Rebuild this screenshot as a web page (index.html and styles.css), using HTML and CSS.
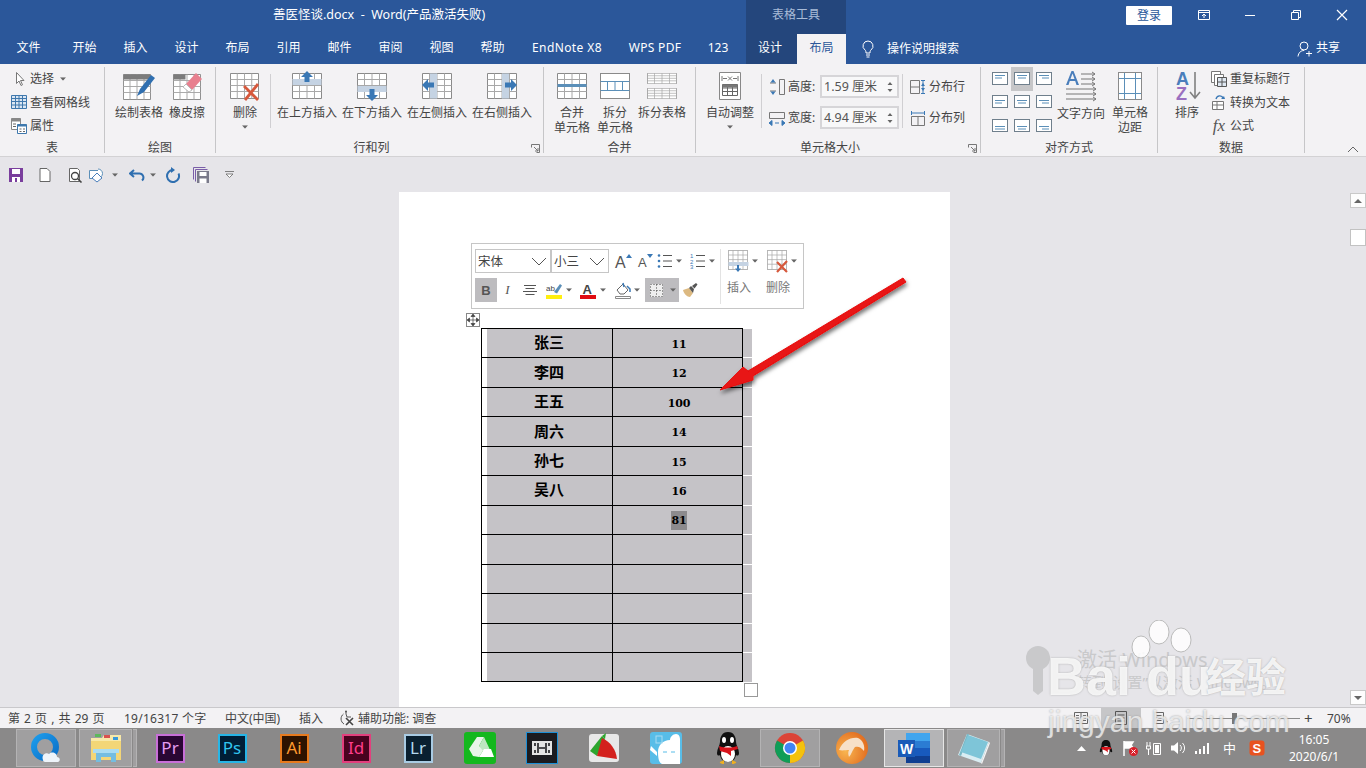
FILE: index.html
```html
<!DOCTYPE html>
<html lang="zh-CN">
<head>
<meta charset="utf-8">
<title>善医怪谈.docx - Word</title>
<link rel="stylesheet" href="styles.css">
</head>
<body>
<svg class="defs" width="0" height="0">
  <symbol id="grid" viewBox="0 0 30 26" preserveAspectRatio="none"><path d="M.5.5h29v25H.5z" fill="#fff" stroke="#8a8a8a"/><path d="M.5 6.500h29M.5 12.500h29M.5 18.500h29M7.500.5v25M15 .5v25M22.500.5v25" fill="none" stroke="#a8a8a8"/></symbol>
  <symbol id="al" viewBox="0 0 16 14"><rect x=".5" y=".5" width="15" height="12" fill="#fff" stroke="#6f7f8c"/></symbol>
  <symbol id="caret" viewBox="0 0 7 4"><path d="M0 0h7L3.500 4z" fill="#666"/></symbol>
</svg>

<header class="title-bar">
  <div class="doc-title">善医怪谈.docx&nbsp; -&nbsp; Word(产品激活失败)</div>
  <div class="context-title">表格工具</div>
  <button class="login">登录</button>
  <div class="win-btn"><svg class="i16" viewBox="0 0 16 16"><path d="M2.500 3.500h11v9h-11zM2.500 5.500h11M8 11V7M6 9l2-2 2 2" fill="none" stroke="#fff"/></svg></div>
  <div class="win-btn"><svg class="i16" viewBox="0 0 16 16"><path d="M3 8.500h10" stroke="#fff"/></svg></div>
  <div class="win-btn"><svg class="i16" viewBox="0 0 16 16"><path d="M3.500 5.500h7v7h-7zM5.500 5V3.500h7v7H11" fill="none" stroke="#fff"/></svg></div>
  <div class="win-btn"><svg class="i16" viewBox="0 0 16 16"><path d="M3 3l10 10M13 3L3 13" stroke="#fff" stroke-width="1.200"/></svg></div>
</header>

<nav class="tabs">
  <div class="tab t-file">文件</div>
  <div class="tab">开始</div><div class="tab">插入</div><div class="tab">设计</div><div class="tab">布局</div>
  <div class="tab">引用</div><div class="tab">邮件</div><div class="tab">审阅</div><div class="tab">视图</div><div class="tab">帮助</div>
  <div class="tab t-en">EndNote X8</div><div class="tab t-wps">WPS PDF</div><div class="tab t-123">123</div>
  <div class="tab t-ctx">设计</div><div class="tab t-active">布局</div>
  <svg class="bulb" viewBox="0 0 14 18"><path d="M7 1a5 5 0 0 0-3 9c.8.7 1 1.500 1 3h4c0-1.500.2-2.300 1-3a5 5 0 0 0-3-9zM5 15h4M5.500 17h3" fill="none" stroke="#fff"/></svg>
  <div class="tell">操作说明搜索</div>
  <svg class="person" viewBox="0 0 16 16"><circle cx="7" cy="5" r="4" fill="none" stroke="#fff"/><path d="M1 15.500c.5-4 3-6 6-6M12 10v5.500M9 12.500h6" fill="none" stroke="#fff"/></svg>
  <div class="share">共享</div>
</nav>

<section class="ribbon">
  <div class="group g1">
    <div class="g-body small-col">
      <div class="s-row"><svg class="i16" viewBox="0 0 16 16"><path d="M5.500 1.500v11l2.500-2.500 2 4.500 1.500-.7-2-4.300h3.500z" fill="#fff" stroke="#777"/></svg><span>选择</span><svg class="caret" viewBox="0 0 7 4"><use href="#caret"/></svg></div>
      <div class="s-row"><svg class="i16" viewBox="0 0 16 14"><path d="M.5.500h15v13H.5z" fill="#dbe7f3" stroke="#3f78ad"/><path d="M.5 3.500h15M.5 6.500h15M.5 10h15M4.500.5v13M8 .5v13M11.500.5v13" stroke="#3f78ad" fill="none"/></svg><span>查看网格线</span></div>
      <div class="s-row"><svg class="i16" viewBox="0 0 16 16"><path d="M.5.500h9v11h-9z" fill="#fff" stroke="#888"/><path d="M.5.500h9v3h-9z" fill="#888"/><path d="M6.500 6.500h9v9h-9z" fill="#fff" stroke="#3f78ad"/><path d="M6.500 6.500h9v2h-9z" fill="#3f78ad"/><path d="M8.500 11h2M12 11h2M8.500 13.500h2M12 13.500h2M2 6h3M2 8.500h3" stroke="#666"/></svg><span>属性</span></div>
    </div>
    <div class="g-label">表</div>
  </div>

  <div class="group g2">
    <div class="g-body">
      <div class="big"><svg class="i-wide" viewBox="0 0 32 30"><use href="#grid" x="0" y="3" width="28" height="26"/><rect x=".5" y="3.500" width="27" height="5" fill="#7b7b7b"/><path d="M14 25l3-7L28 4l4 3-11 14z" fill="#2f6fb0"/></svg><span>绘制表格</span></div>
      <div class="big b-eraser"><svg class="i30" viewBox="0 0 30 30"><use href="#grid" x="1" y="3" width="28" height="26"/><rect x="1.500" y="3.500" width="12" height="5" fill="#7b7b7b"/><path d="M14 13L24 2l6 6-10 11z" fill="#e8808f"/><path d="M14 13l6 6-3 2-6-5z" fill="#fff" stroke="#bbb"/></svg><span>橡皮擦</span></div>
    </div>
    <div class="g-label">绘图</div>
  </div>

  <div class="group g3">
    <div class="g-body">
      <div class="big b-del"><svg class="i30" viewBox="0 0 30 30"><use href="#grid" x="0" y="2" width="29" height="26"/><path d="M14 15l14 14M28 13L15 29" stroke="#d6583c" stroke-width="2.800"/></svg><span>删除</span><svg class="caret-b" viewBox="0 0 7 4"><use href="#caret"/></svg></div>
      <div class="v-sep s1"></div>
      <div class="big b-ins"><svg class="i30" viewBox="0 0 30 30"><use href="#grid" x="0" y="2" width="30" height="26"/><rect x=".5" y="8" width="29" height="6" fill="#c5d3e3"/><path d="M15 0l6 6h-3.500v5h-5V6H9z" fill="#3a78b5"/></svg><span>在上方插入</span></div>
      <div class="big b-ins"><svg class="i30" viewBox="0 0 30 30"><use href="#grid" x="0" y="2" width="30" height="26"/><rect x=".5" y="15" width="29" height="6" fill="#c5d3e3"/><path d="M15 30l-6-6h3.500v-6h5v6H21z" fill="#3a78b5"/></svg><span>在下方插入</span></div>
      <div class="big b-ins"><svg class="i30" viewBox="0 0 30 30"><use href="#grid" x="0" y="2" width="30" height="26"/><rect x="8" y="2.500" width="7" height="25" fill="#c5d3e3"/><path d="M0 14l6-6v3.500h6v5H6V20z" fill="#3a78b5"/></svg><span>在左侧插入</span></div>
      <div class="big b-ins"><svg class="i30" viewBox="0 0 30 30"><use href="#grid" x="0" y="2" width="30" height="26"/><rect x="15" y="2.500" width="7" height="25" fill="#c5d3e3"/><path d="M30 14l-6-6v3.500h-6v5h6V20z" fill="#3a78b5"/></svg><span>在右侧插入</span></div>
    </div>
    <div class="g-label g3-label">行和列</div>
    <svg class="launcher" viewBox="0 0 9 9"><path d="M.5 3.500V.5h8v8h-3M3 3l4 4M7 4v3H4" fill="none" stroke="#777"/></svg>
  </div>

  <div class="group g4">
    <div class="g-body">
      <div class="big"><svg class="i30" viewBox="0 0 30 30"><use href="#grid" x="0" y="2" width="30" height="26"/><path d="M.5 14.500h29M.5 13.500h29M.5 15.500h29" stroke="#5b8fb8"/></svg><span>合并<br>单元格</span></div>
      <div class="big b-split"><svg class="i30" viewBox="0 0 30 30"><rect x=".5" y="2.500" width="29" height="25" fill="#fff" stroke="#8a8a8a"/><path d="M.5 10.500h29M.5 19.500h29" stroke="#5b8fb8"/><path d="M7.500 10.500v9M15 10.500v9M22.500 10.500v9" stroke="#5b8fb8"/></svg><span>拆分<br>单元格</span></div>
      <div class="big b-splitt"><svg class="i30" viewBox="0 0 30 30"><use href="#grid" x="0" y="2" width="30" height="11"/><use href="#grid" x="0" y="17" width="30" height="11"/></svg><span>拆分表格</span></div>
    </div>
    <div class="g-label">合并</div>
  </div>

  <div class="group g5">
    <div class="g-body">
      <div class="big b-auto"><svg class="i30" viewBox="0 0 30 30"><path d="M4.500 1.500h21v27h-21z" fill="#fff" stroke="#888"/><path d="M7 5v5M23 5v5M8 7.500h4M18 7.500h4M13 5.500l4 4M17 5.500l-4 4" stroke="#777" fill="none"/><path d="M7.500 13.500h15v11h-15zM7.500 17h15M7.500 20.500h15M12.500 13.500v11M17.500 13.500v11" stroke="#666" fill="none"/><rect x="7.500" y="13.500" width="15" height="3" fill="#777"/></svg><span>自动调整</span><svg class="caret-b" viewBox="0 0 7 4"><use href="#caret"/></svg></div>
      <div class="v-sep s2"></div>
      <div class="size-col">
        <div class="size-row"><svg class="i16" viewBox="0 0 16 16"><path d="M10.500.5h5v15h-5zM1 4h6M1 12h6" fill="none" stroke="#777"/><path d="M4 0L1.500 3.500h5zM4 16L1.500 12.500h5z" fill="#3a78b5"/></svg><span class="sz-label">高度:</span><div class="sz-input"><span>1.59 厘米</span><svg class="spin" viewBox="0 0 8 16"><path d="M4 3L1.500 6h5zM4 13L1.500 10h5z" fill="#666"/></svg></div></div>
        <div class="size-row"><svg class="i16" viewBox="0 0 16 16"><path d="M.5 2.500h15v6H.5z" fill="none" stroke="#777"/><path d="M0 13l3-2.500v5zM16 13l-3-2.500v5zM6 13h4" fill="#3a78b5" stroke="#3a78b5"/></svg><span class="sz-label">宽度:</span><div class="sz-input"><span>4.94 厘米</span><svg class="spin" viewBox="0 0 8 16"><path d="M4 3L1.500 6h5zM4 13L1.500 10h5z" fill="#666"/></svg></div></div>
      </div>
      <div class="v-sep s3"></div>
      <div class="size-col dist">
        <div class="size-row"><svg class="i16" viewBox="0 0 16 16"><path d="M.5 1.500h9v13h-9zM.5 8h9" fill="none" stroke="#777"/><path d="M13 1v14M11 1.500h4M11 14.500h4" fill="none" stroke="#3a78b5"/><path d="M13 4l-2 3h4zM13 12l-2-3h4z" fill="#3a78b5"/></svg><span>分布行</span></div>
        <div class="size-row"><svg class="i16" viewBox="0 0 16 16"><path d="M1.500 6.500h13v9h-13zM8 6.500v9" fill="none" stroke="#777"/><path d="M1 3h14M1.500 1v4M14.500 1v4" fill="none" stroke="#3a78b5"/></svg><span>分布列</span></div>
      </div>
    </div>
    <div class="g-label g5-label">单元格大小</div>
    <svg class="launcher" viewBox="0 0 9 9"><path d="M.5 3.500V.5h8v8h-3M3 3l4 4M7 4v3H4" fill="none" stroke="#777"/></svg>
  </div>

  <div class="group g6">
    <div class="g-body">
      <div class="align-grid">
        <div class="al"><svg class="i-al" viewBox="0 0 16 14"><use href="#al" width="16" height="14"/><path d="M3 3.500h10M3 6h7" stroke="#5b8fb8"/></svg></div>
        <div class="al al-on"><svg class="i-al" viewBox="0 0 16 14"><use href="#al" width="16" height="14"/><path d="M3 3.500h10M4 6h8" stroke="#5b8fb8"/></svg></div>
        <div class="al"><svg class="i-al" viewBox="0 0 16 14"><use href="#al" width="16" height="14"/><path d="M3 3.500h10M6 6h7" stroke="#5b8fb8"/></svg></div>
        <div class="al"><svg class="i-al" viewBox="0 0 16 14"><use href="#al" width="16" height="14"/><path d="M3 5.500h10M3 8h7" stroke="#5b8fb8"/></svg></div>
        <div class="al"><svg class="i-al" viewBox="0 0 16 14"><use href="#al" width="16" height="14"/><path d="M3 5.500h10M4 8h8" stroke="#5b8fb8"/></svg></div>
        <div class="al"><svg class="i-al" viewBox="0 0 16 14"><use href="#al" width="16" height="14"/><path d="M3 5.500h10M6 8h7" stroke="#5b8fb8"/></svg></div>
        <div class="al"><svg class="i-al" viewBox="0 0 16 14"><use href="#al" width="16" height="14"/><path d="M3 7.500h10M3 10h10" stroke="#5b8fb8"/></svg></div>
        <div class="al"><svg class="i-al" viewBox="0 0 16 14"><use href="#al" width="16" height="14"/><path d="M3 7.500h10M4 10h8" stroke="#5b8fb8"/></svg></div>
        <div class="al"><svg class="i-al" viewBox="0 0 16 14"><use href="#al" width="16" height="14"/><path d="M3 7.500h10M6 10h7" stroke="#5b8fb8"/></svg></div>
      </div>
      <div class="big b-dir"><svg class="i-dir" viewBox="0 0 32 32"><path d="M1 15L6.500 1h2L14 15h-2.500l-1.300-4H4.800l-1.300 4zM5.500 9h4L7.500 3.500z" fill="#4a7ebb"/><path d="M16 4h14M16 9h14M16 14h14M1 19h30M1 24h30M1 29h30M27 2l3 2-3 2M27 7l3 2-3 2M27 12l3 2-3 2M28 17l3 2-3 2M28 22l3 2-3 2M28 27l3 2-3 2" fill="none" stroke="#777"/></svg><span>文字方向</span></div>
      <div class="big b-marg"><svg class="i30" viewBox="0 0 30 30"><rect x="3.500" y="1.500" width="23" height="27" fill="#fff" stroke="#8a8a8a"/><path d="M9.500 2v26M20.500 2v26M4 7.500h22M4 22.500h22" stroke="#5b8fb8" fill="none"/></svg><span>单元格<br>边距</span></div>
    </div>
    <div class="g-label">对齐方式</div>
  </div>

  <div class="group g7">
    <div class="g-body">
      <div class="big b-sort"><svg class="i-sort" viewBox="0 0 28 30"><text x="3" y="14" class="az-a">A</text><text x="3" y="29" class="az-z">Z</text><path d="M22 1v26M17 21l5 6 5-6" fill="none" stroke="#808080" stroke-width="1.600"/></svg><span>排序</span></div>
      <div class="small-col data-col">
        <div class="s-row"><svg class="i16" viewBox="0 0 16 16"><path d="M.5.500h9v11h-9z" fill="#fff" stroke="#777"/><path d="M3.500 3.500h9v11h-9z" fill="#fff" stroke="#777"/><path d="M6.500 6.500h9v9h-9zM6.500 11h9M11 6.500v9" fill="#dfe8f2" stroke="#555"/></svg><span>重复标题行</span></div>
        <div class="s-row"><svg class="i16" viewBox="0 0 16 16"><path d="M1.500 7.500h11v8h-11zM1.500 11h11M6 7.500v8" fill="#fff" stroke="#777"/><path d="M5 5c1-4 6-4 7-1" fill="none" stroke="#3a78b5" stroke-width="1.400"/><path d="M10 5l4 0-1-3z" fill="#3a78b5"/></svg><span>转换为文本</span></div>
        <div class="s-row"><span class="fx">fx</span><span>公式</span></div>
      </div>
    </div>
    <div class="g-label g7-label">数据</div>
  </div>
  <svg class="collapse" viewBox="0 0 12 7"><path d="M1 6l5-5 5 5" fill="none" stroke="#666"/></svg>
</section>

<section class="qat">
  <svg class="q q-save" viewBox="0 0 16 16"><path d="M1 1h14v14H1z" fill="#7a3e9d"/><rect x="4" y="2" width="8" height="5" fill="#fff"/><rect x="4" y="10" width="8" height="5" fill="#fff"/><rect x="7" y="11" width="2" height="4" fill="#7a3e9d"/></svg>
  <svg class="q q-new" viewBox="0 0 16 16"><path d="M3 1.500h7l3 3v10H3z" fill="#fff" stroke="#666"/></svg>
  <svg class="q q-prev" viewBox="0 0 16 16"><path d="M2.500 1.500h8l2 2v11h-10z" fill="#fff" stroke="#666"/><circle cx="8" cy="9" r="3.500" fill="none" stroke="#444" stroke-width="1.300"/><path d="M10.500 11.500l4 4" stroke="#444" stroke-width="1.600"/></svg>
  <svg class="q q-shape" viewBox="0 0 16 16"><path d="M.5 3.500h9v8h-9z" fill="#fff" stroke="#5b8fb8"/><path d="M9 2a4.500 4.500 0 1 1 0 9" fill="#fff" stroke="#5b8fb8"/><path d="M8 6l5 5-5 4-5-4z" fill="#fff" stroke="#4a7ebb"/></svg>
  <svg class="q-caret" viewBox="0 0 7 4"><use href="#caret"/></svg>
  <svg class="q q-undo" viewBox="0 0 16 16"><path d="M5 3L1 6.500 5 10M1.500 6.500H10a4 4 0 0 1 3 7" fill="none" stroke="#2f6fb0" stroke-width="2"/></svg>
  <svg class="q-caret c2" viewBox="0 0 7 4"><use href="#caret"/></svg>
  <svg class="q q-redo" viewBox="0 0 16 16"><path d="M8 3a6 6 0 1 0 5.500 3.500" fill="none" stroke="#2f6fb0" stroke-width="2"/><path d="M6 0v6l4-3z" fill="#2f6fb0"/></svg>
  <svg class="q q-saveall" viewBox="0 0 16 16"><path d="M.5.500h12M.5.500v12M2.500 2.500h12M2.500 2.500v12" fill="none" stroke="#7a5ea8"/><path d="M4 4h12v12H4z" fill="#7a7a8a"/><rect x="6.500" y="5" width="7" height="4" fill="#fff"/><rect x="6.500" y="11.500" width="7" height="4.500" fill="#fff"/></svg>
  <svg class="q-more" viewBox="0 0 9 7"><path d="M0 .5h9M1 3h7L4.500 6.500z" fill="#fff" stroke="#666" stroke-width=".8"/></svg>
</section>

<main class="work">
  <div class="page-wrap">
    <div class="page">
      <div class="doc-table">
        <div class="t-row"><div class="cell c-a">张三</div><div class="cell c-b">11</div><div class="row-end"></div></div>
        <div class="t-row"><div class="cell c-a">李四</div><div class="cell c-b">12</div><div class="row-end"></div></div>
        <div class="t-row"><div class="cell c-a">王五</div><div class="cell c-b">100</div><div class="row-end"></div></div>
        <div class="t-row"><div class="cell c-a">周六</div><div class="cell c-b">14</div><div class="row-end"></div></div>
        <div class="t-row"><div class="cell c-a">孙七</div><div class="cell c-b">15</div><div class="row-end"></div></div>
        <div class="t-row"><div class="cell c-a">吴八</div><div class="cell c-b">16</div><div class="row-end"></div></div>
        <div class="t-row"><div class="cell c-a"></div><div class="cell c-b"><span class="sel">81</span></div><div class="row-end"></div></div>
        <div class="t-row"><div class="cell c-a"></div><div class="cell c-b"></div><div class="row-end"></div></div>
        <div class="t-row"><div class="cell c-a"></div><div class="cell c-b"></div><div class="row-end"></div></div>
        <div class="t-row"><div class="cell c-a"></div><div class="cell c-b"></div><div class="row-end"></div></div>
        <div class="t-row"><div class="cell c-a"></div><div class="cell c-b"></div><div class="row-end"></div></div>
        <div class="t-row t-last"><div class="cell c-a"></div><div class="cell c-b"></div><div class="row-end"></div></div>
        <div class="move-handle"><svg viewBox="0 0 12 12"><path d="M6 0l2 2.500H4zM6 12l2-2.500H4zM0 6l2.500-2v4zM12 6L9.500 4v4zM6 2v8M2 6h8" fill="#444" stroke="#444" stroke-width=".7"/></svg></div>
        <div class="resize-handle"></div>
      </div>

      <div class="mini">
        <div class="mini-left">
          <div class="mini-row">
            <div class="combo c-font"><span>宋体</span><svg class="chev" viewBox="0 0 16 9"><path d="M1 1l7 7 7-7" fill="none" stroke="#555"/></svg></div>
            <div class="combo c-size"><span>小三</span><svg class="chev" viewBox="0 0 16 9"><path d="M1 1l7 7 7-7" fill="none" stroke="#555"/></svg></div>
            <div class="mi m-grow"><span class="big-a">A</span><svg class="tri" viewBox="0 0 6 4"><path d="M3 0l3 4H0z" fill="#3a78b5"/></svg></div>
            <div class="mi m-shrink"><span class="small-a">A</span><svg class="tri" viewBox="0 0 6 4"><path d="M3 4l3-4H0z" fill="#3a78b5"/></svg></div>
            <div class="mi m-list"><svg class="i16" viewBox="0 0 16 16"><circle cx="2" cy="2.500" r="1.300" fill="#3a78b5"/><circle cx="2" cy="8" r="1.300" fill="#3a78b5"/><circle cx="2" cy="13.500" r="1.300" fill="#3a78b5"/><path d="M6 2.500h9M6 8h9M6 13.500h9" stroke="#555"/></svg><svg class="mc" viewBox="0 0 7 4"><use href="#caret"/></svg></div>
            <div class="mi m-list m-list2"><svg class="i16" viewBox="0 0 16 16"><text x="0" y="5" class="numtxt">1</text><text x="0" y="10.500" class="numtxt">2</text><text x="0" y="16" class="numtxt">3</text><path d="M6 2.500h9M6 8h9M6 13.500h9" stroke="#555"/></svg><svg class="mc" viewBox="0 0 7 4"><use href="#caret"/></svg></div>
          </div>
          <div class="mini-row row2">
            <div class="mb m-b">B</div>
            <div class="mb m-i">I</div>
            <div class="mb m-al"><svg class="i16" viewBox="0 0 16 16"><path d="M2 3.500h12M3.500 6.500h9M1 9.500h14M3.500 12.500h9" stroke="#555"/></svg></div>
            <div class="mb m-hl"><svg class="i-hl" viewBox="0 0 16 17"><text x="0" y="9" class="hltxt">ab</text><path d="M8 10l6-8 2 1.500-5 8z" fill="#5b8fb8"/><rect y="13" width="16" height="4" fill="#ffef10"/></svg><svg class="mc" viewBox="0 0 7 4"><use href="#caret"/></svg></div>
            <div class="mb m-col"><svg class="i-hl" viewBox="0 0 16 17"><text x="2.500" y="12" class="coltxt">A</text><rect y="13" width="16" height="4" fill="#e00c12"/></svg><svg class="mc" viewBox="0 0 7 4"><use href="#caret"/></svg></div>
            <div class="mb m-fill"><svg class="i-hl" viewBox="0 0 16 17"><path d="M2 8l6-6 5 6-4 4H5z" fill="#fff" stroke="#666"/><path d="M8 1l1 4M12 4l3 3 0 3" fill="none" stroke="#3a78b5" stroke-width="1.500"/><path d="M.5 14.500h15v2H.5z" fill="#fff" stroke="#888"/></svg><svg class="mc" viewBox="0 0 7 4"><use href="#caret"/></svg></div>
            <div class="mb m-bord"><svg class="i-bd" viewBox="0 0 13 13"><rect width="13" height="13" fill="#eee"/><path d="M.5.500h12v12H.5zM.5 6.500h12M6.500.5v12" fill="none" stroke="#444" stroke-dasharray="1 2"/></svg><svg class="mc" viewBox="0 0 7 4"><use href="#caret"/></svg></div>
            <div class="mb m-brush"><svg class="i16" viewBox="0 0 16 16"><path d="M1 8l6-2 4 5-3 4c-3 0-6-3-7-7z" fill="#dcb981"/><path d="M7 6l2-2 3 3-1 4z" fill="#555"/><path d="M10 4l4-3 1.500 1.500-3 4z" fill="#555"/></svg></div>
          </div>
        </div>
        <div class="mini-right">
          <div class="mini-act"><svg class="i-act" viewBox="0 0 24 24"><use href="#grid" x="1" y="1" width="20" height="20"/><rect x="1.500" y="13" width="20" height="4" fill="#c5d3e3"/><path d="M11 23l-3-3.500h2V16h2v3.500h2z" fill="#3a78b5"/></svg><svg class="mc" viewBox="0 0 7 4"><use href="#caret"/></svg><span>插入</span></div>
          <div class="mini-act"><svg class="i-act" viewBox="0 0 24 24"><use href="#grid" x="1" y="1" width="20" height="20"/><path d="M11 13l10 10M21 12L11 23" stroke="#d6583c" stroke-width="2.200"/></svg><svg class="mc" viewBox="0 0 7 4"><use href="#caret"/></svg><span>删除</span></div>
        </div>
      </div>
    </div>
  </div>
  <aside class="vscroll">
    <div class="sb-btn"><svg class="sb-ar" viewBox="0 0 8 4"><path d="M4 0l4 4H0z" fill="#666"/></svg></div>
    <div class="sb-thumb"></div>
    <div class="sb-fill"></div>
    <div class="sb-btn"><svg class="sb-ar" viewBox="0 0 8 4"><path d="M4 4l4-4H0z" fill="#666"/></svg></div>
  </aside>
</main>

<footer class="status">
  <span class="st st-page">第 2 页 , 共 29 页</span>
  <span class="st st-words">19/16317 个字</span>
  <span class="st st-lang">中文(中国)</span>
  <span class="st st-ins">插入</span>
  <svg class="st-acc" viewBox="0 0 16 16"><path d="M4.500 4a6 6 0 0 0 .5 10M7 1v3l1 3h4" fill="none" stroke="#555"/><circle cx="7" cy="1.500" r="1" fill="#555"/><path d="M7 8l7 7M14 8l-7 7" stroke="#444" stroke-width="1.600"/></svg>
  <span class="st">辅助功能: 调查</span>
  <div class="st-right">
    <div class="view"><svg class="i16" viewBox="0 0 16 16"><path d="M1.500 2.500h13v11h-13zM8 2.500v11M3 5.500h3M3 8h3M3 10.500h3M10 5.500h3M10 8h3M10 10.500h3" fill="none" stroke="#666"/></svg></div>
    <div class="view view-on"><svg class="i16" viewBox="0 0 16 16"><path d="M2.500 1.500h11v13h-11zM4.500 5h7M4.500 8h7M4.500 11h7" fill="none" stroke="#555"/></svg></div>
    <div class="view"><svg class="i16" viewBox="0 0 16 16"><path d="M1.500 2.500h9v11h-9zM3.500 5.500h5M3.500 8h5M3.500 10.500h5" fill="none" stroke="#666"/><path d="M11 8l4 4-2 .5-1 2z" fill="#666"/></svg></div>
    <div class="zoom-track"><div class="zoom-thumb"></div></div>
    <span class="zoom-plus">+</span>
    <span class="zoom-val">70%</span>
  </div>
</footer>

<footer class="taskbar">
  <div class="slot on"><svg class="ti" viewBox="0 0 32 32"><defs><linearGradient id="qb" x1="0" y1="0" x2="1" y2="1"><stop offset="0" stop-color="#1c9bea"/><stop offset="1" stop-color="#0b6fc8"/></linearGradient></defs><circle cx="15" cy="15" r="11" fill="none" stroke="url(#qb)" stroke-width="6"/><path d="M13 28c-2-5 3-8 6-6 3-3 8-1 8 3 3 0 4 4 1 5H15c-1 0-2-1-2-2z" fill="#eef4fa"/></svg></div>
  <div class="slot slot-stack"><div class="stack-main"><svg class="ti" viewBox="0 0 32 32"><path d="M1 6h30v22H1z" fill="#f3d677"/><path d="M1 6h11l2-3h17v6H1z" fill="#f8e9a8"/><rect x="5" y="2" width="6" height="3" fill="#5cb85c"/><rect x="14" y="3" width="6" height="3" fill="#d9534f"/><rect x="23" y="5" width="5" height="3" fill="#3a9ad9"/><path d="M6 21h20v9h-5v-5H11v5H6z" fill="#74bde0"/><path d="M3 17h26v4H3z" fill="#a9dcf2"/></svg></div><div class="stack-tail"></div></div>
  <div class="slot"><div class="tile t-pr">Pr</div></div>
  <div class="slot"><div class="tile t-ps">Ps</div></div>
  <div class="slot"><div class="tile t-ai">Ai</div></div>
  <div class="slot"><div class="tile t-id">Id</div></div>
  <div class="slot"><div class="tile t-lr">Lr</div></div>
  <div class="slot"><svg class="ti" viewBox="0 0 32 32"><rect width="32" height="32" rx="3" fill="#14b81e"/><path d="M5 17L13 5h7l-5 9 5 3-5 8-6-1z" fill="#e8f5e8"/><path d="M20 5l7 15h-7l-5-6z" fill="#bfe6c0"/><path d="M15 25l5-8h7l3 8z" fill="#fff"/></svg></div>
  <div class="slot"><svg class="ti" viewBox="0 0 32 32"><rect x=".5" y=".5" width="31" height="31" fill="#1b1b1f" stroke="#1c8fd6"/><path d="M6 9h20v14H6z" fill="#e4e4e4"/><path d="M9 11v3M9 18v3M12 11v10M20 11v10M23 11v3M23 18v3M13 16h6" stroke="#1b1b1f" stroke-width="1.600"/></svg></div>
  <div class="slot"><svg class="ti" viewBox="0 0 32 32"><rect x="1" y="2" width="30" height="28" rx="3" fill="#e8e8e8"/><path d="M2 19L14 4l3 3-8 17z" fill="#2da52e"/><path d="M14 6c9 4 14 12 15 21l-20-3z" fill="#d3211d"/><path d="M14 4l4-3-1 6z" fill="#2da52e"/></svg></div>
  <div class="slot"><svg class="ti" viewBox="0 0 32 32"><rect width="32" height="32" rx="3" fill="#58bde8"/><path d="M8 20c0-7 5-12 12-12 0-3 3-6 6-6 3 0 4 3 4 5v25H12c-3-1-4-6-4-12z" fill="#fff"/><path d="M13 20h4M21 20h4" stroke="#58bde8"/><path d="M1 14l6 6v4l-7-6z" fill="#fff"/><rect x="6" y="4" width="6" height="7" fill="none" stroke="#a9dcf2"/></svg></div>
  <div class="slot"><svg class="ti" viewBox="0 0 32 32"><path d="M16 0c-6 0-8 5-8 10 0 3-3 7-3 11 0 3 2 3 3 2 1 5 4 7 8 7s7-2 8-7c1 1 3 1 3-2 0-4-3-8-3-11 0-5-2-10-8-10z" fill="#111"/><ellipse cx="16" cy="22" rx="7" ry="8" fill="#fff"/><path d="M7 14c5 2 13 2 18 0l1 3-7 2v5l-4-3-7-2z" fill="#d8141c"/><ellipse cx="12" cy="8" rx="2" ry="3" fill="#fff"/><ellipse cx="20" cy="8" rx="2" ry="3" fill="#fff"/><path d="M12 32c-2 0-5-1-4-2l4-2zM20 32c2 0 5-1 4-2l-4-2z" fill="#f0b020"/></svg></div>
  <div class="slot on"><svg class="ti" viewBox="0 0 32 32"><circle cx="16" cy="16" r="15" fill="#db4437"/><path d="M16 16L29 8.500A15 15 0 0 1 16 31z" fill="#f4c20d"/><path d="M16 16L16 31A15 15 0 0 1 3 8.500z" fill="#0f9d58"/><circle cx="16" cy="16" r="7" fill="#fff"/><circle cx="16" cy="16" r="5.500" fill="#4285f4"/></svg></div>
  <div class="slot"><svg class="ti" viewBox="0 0 32 32"><defs><radialGradient id="fx" cx=".3" cy=".6" r=".8"><stop offset="0" stop-color="#f8b550"/><stop offset="1" stop-color="#e0651a"/></radialGradient></defs><circle cx="16" cy="16" r="16" fill="url(#fx)"/><path d="M3 18c4-9 11-13 19-12 5 2 7 8 6 13-3-4-6-5-9-4-2 2-4 8-6 10-1-3-1-5 0-7-3 0-7 1-10 0z" fill="#f7e0c8"/></svg></div>
  <div class="slot on bright"><svg class="ti" viewBox="0 0 32 32"><rect x="8" y="1" width="24" height="30" rx="1" fill="#2b7cd3"/><rect x="8" y="1" width="24" height="8" fill="#41a5ee"/><rect x="8" y="16" width="24" height="8" fill="#185abd"/><rect x="8" y="24" width="24" height="7" fill="#103f91"/><rect y="8" width="17" height="17" fill="#1a5bb8"/><text x="8.500" y="21.500" class="wtxt">W</text></svg></div>
  <div class="slot slot-stack"><div class="stack-main"><svg class="ti" viewBox="0 0 32 32"><path d="M9 2l22 8-8 21-23-8z" fill="#d9edf3"/><path d="M9 2L1 23l2 1 8-22z" fill="#7ab8c6"/><path d="M10 3l20 7-7 17-20-7z" fill="#7ec5d8"/><path d="M23 31l8-21 1 1-8 21z" fill="#f5f5f5"/></svg></div><div class="stack-tail"></div></div>
  <div class="tray">
    <svg class="t-up" viewBox="0 0 9 5"><path d="M4.500 0L9 5H0z" fill="#fff"/></svg>
    <svg class="t-ic" viewBox="0 0 16 18"><path d="M8 0C4 0 3 3 3 6c0 2-2 4-2 7 0 1 1 1 2 0 1 3 3 4 5 4s4-1 5-4c1 1 2 1 2 0 0-3-2-5-2-7 0-3-1-6-5-6z" fill="#111"/><ellipse cx="8" cy="12" rx="4" ry="5" fill="#fff"/><path d="M3 8h10l1 2-4 1v3l-2-2-5-2z" fill="#d8141c"/></svg>
    <svg class="t-ic" viewBox="0 0 16 16"><path d="M2 1v15M2 2h9l-2 3 2 3H2" fill="#fff" stroke="#fff" stroke-width="1.500"/><circle cx="11.500" cy="11.500" r="4.500" fill="#d8202a"/><path d="M9.500 9.500l4 4M13.500 9.500l-4 4" stroke="#fff"/></svg>
    <svg class="t-ic" viewBox="0 0 16 16"><path d="M7.500 3.500h7v11h-7z" fill="none" stroke="#fff"/><rect x="9" y="5" width="4" height="8" fill="#fff"/><path d="M1 2v4M4 2v4M.5 6h4v3h-4zM2.500 9v6" fill="none" stroke="#fff"/></svg>
    <svg class="t-ic" viewBox="0 0 16 16"><path d="M1 5.500h3l4-3.500v12l-4-3.500H1z" fill="#fff"/><path d="M10 5a4 4 0 0 1 0 6M12.500 3a7 7 0 0 1 0 10" fill="none" stroke="#fff"/></svg>
    <svg class="t-ic" viewBox="0 0 16 16"><path d="M1 11h2v3H1zM5 9h2v5H5zM9 6h2v8H9zM13 3h2v11h-2z" fill="#fff"/></svg>
    <span class="t-zh">中</span>
    <svg class="t-ic t-s" viewBox="0 0 16 16"><rect x=".5" y=".5" width="15" height="15" rx="3" fill="#e8521f"/><text x="3.500" y="13" class="stxt">S</text></svg>
    <div class="clock"><span>16:05</span><span>2020/6/1</span></div>
  </div>
</footer>

<svg class="arrow" viewBox="0 0 240 160"><defs><filter id="sh" x="-20%" y="-20%" width="140%" height="140%"><feDropShadow dx="1" dy="3" stdDeviation="2.200" flood-color="#000" flood-opacity=".55"/></filter></defs><path d="M8 118L31 95 36 99 191 6 194 10 41 104 41 108z" fill="#e81212" stroke="#e81212" stroke-linejoin="round" filter="url(#sh)"/></svg>

<div class="wm">
  <svg class="wm-key" viewBox="0 0 30 50"><circle cx="15" cy="13" r="12" fill="#c9c9cb"/><path d="M10 20h10v26l-5 4-5-4z" fill="#c9c9cb"/></svg>
  <div class="wm-act1">激活 Windows</div>
  <div class="wm-act2">转到“设置”以激活 Windows。</div>
  <svg class="wm-paw" viewBox="0 0 70 60"><ellipse cx="34" cy="12" rx="10" ry="12" fill="#fff" fill-opacity=".85" stroke="#bbb"/><ellipse cx="56" cy="20" rx="10" ry="12" fill="#fff" fill-opacity=".85" stroke="#bbb"/><ellipse cx="16" cy="27" rx="9" ry="11" fill="#fff" fill-opacity=".85" stroke="#bbb"/></svg>
  <div class="wm-bai">Bai du</div>
  <div class="wm-jy">经验</div>
  <div class="wm-url">jingyan.baidu.com</div>
</div>
</body>
</html>
```

FILE: styles.css
```css
* { box-sizing: border-box; }
html, body { margin: 0; padding: 0; }
body {
  width: 1366px; height: 768px; overflow: hidden; position: relative;
  display: flex; flex-direction: column;
  font: 12px/15px "Noto Sans", "Noto Sans CJK SC", sans-serif;
  color: #444; background: #e6e5e9;
}
svg { display: block; flex: none; }
.defs { position: absolute; }
.i16 { width: 16px; height: 16px; }
.i30 { width: 30px; height: 30px; }
.i-wide { width: 32px; height: 30px; }

/* title bar */
.title-bar { height: 34px; background: #2b579a; color: #fff; display: flex; align-items: stretch; flex: none; }
.doc-title { margin-left: 273px; width: 473px; font-size: 12.500px; line-height: 30px; white-space: nowrap; }
.context-title { width: 100px; background: #24467c; color: #a9bcd8; text-align: center; line-height: 30px; font-size: 12px; }
.login { margin: 6px 9px 9px 280px; width: 46px; height: 19px; background: #fff; color: #2b579a; border: 0; border-radius: 1px; padding: 0; font: inherit; line-height: 19px; }
.win-btn { width: 46px; display: flex; align-items: center; justify-content: center; padding-bottom: 4px; }

/* tabs */
.tabs { height: 30px; background: #2b579a; color: #fff; display: flex; align-items: stretch; flex: none; }
.tab { width: 51px; text-align: center; line-height: 28px; font-size: 12px; white-space: nowrap; }
.t-file { margin: 0 5px 0 3px; }
.t-en { width: 98px; letter-spacing: .4px; }
.t-wps { width: 78px; letter-spacing: .3px; }
.t-123 { width: 48px; margin-right: 4px; }
.t-ctx { background: #24467c; padding-right: 3px; }
.t-active { width: 49px; background: #f3f2f4; color: #2b579a; }
.bulb { width: 14px; height: 18px; margin: 6px 0 0 15px; }
.tell { margin-left: 12px; line-height: 29px; width: 72px; white-space: nowrap; }
.person { width: 16px; height: 18px; margin: 6px 0 0 338px; }
.share { margin-left: 3px; line-height: 27px; white-space: nowrap; }

/* ribbon */
.ribbon { height: 93px; background: #f3f2f4; border-bottom: 1px solid #d3d2d4; display: flex; flex: none; padding: 3px 0 3px; position: relative; }
.group { position: relative; display: flex; flex-direction: column; border-right: 1px solid #c6c6c8; flex: none; }
.g1 { width: 105px; } .g2 { width: 111px; } .g3 { width: 328px; } .g4 { width: 152px; }
.g5 { width: 285px; } .g6 { width: 177px; } .g7 { width: 147px; }
.g-body { height: 73px; display: flex; }
.g-label { height: 13px; text-align: center; line-height: 15px; color: #444; }
.g3-label { padding-right: 16px; } .g5-label { padding-right: 16px; }
.launcher { position: absolute; right: 3px; bottom: 0; width: 9px; height: 9px; }
.collapse { position: absolute; right: 7px; bottom: 3px; width: 12px; height: 7px; }
.small-col { display: flex; flex-direction: column; }
.g1 .small-col { padding-left: 11px; }
.s-row { height: 23.500px; display: flex; align-items: center; gap: 3px; white-space: nowrap; }
.caret { width: 6px; height: 4px; margin-left: 3px; }
.big { display: flex; flex-direction: column; align-items: center; padding-top: 4px; text-align: center; white-space: nowrap; }
.big > svg:first-child { margin-bottom: 4px; }
.caret-b { width: 6px; height: 4px; margin-top: 5px; }
.g2 .g-body { padding-left: 10px; }
.b-eraser { margin-left: 6px; }
.g3 .g-body { padding-left: 14px; }
.v-sep { width: 1px; height: 54px; background: #d0cfd2; margin-top: 7px; flex: none; }
.s1 { margin-left: 10px; margin-right: 6px; }
.b-ins { margin-right: 5px; }
.g4 .g-body { padding-left: 10px; }
.b-split { margin-left: 7px; }
.b-splitt { margin-left: 5px; }
.g5 .g-body { padding-left: 10px; }
.s2 { margin-left: 7px; margin-right: 7px; }
.size-col { display: flex; flex-direction: column; gap: 8px; padding-top: 8px; }
.size-row { height: 23px; display: flex; align-items: center; white-space: nowrap; }
.sz-label { margin: 0 5px 0 3px; width: 27px; }
.sz-input { width: 79px; height: 23px; border: 2px solid #d6d5d8; background: #f8f8f9; display: flex; align-items: center; justify-content: space-between; padding: 0 3px 0 2px; color: #555; font-size: 12.500px; }
.spin { width: 8px; height: 16px; }
.s3 { margin-left: 3px; margin-right: 7px; }
.dist .size-row { gap: 3px; }
.g6 .g-body { padding-left: 8px; }
.align-grid { display: grid; grid-template-columns: repeat(3, 22px); grid-auto-rows: 23.500px; }
.al { display: flex; align-items: center; justify-content: center; }
.al-on { background: #c6c6c8; }
.i-al { width: 16px; height: 14px; }
.b-dir { margin-left: 2px; }
.big > .i-dir { width: 32px; height: 32px; margin-bottom: 1px; margin-top: -1px; }
.b-marg { margin-left: 7px; }
.g7 .g-body { padding-left: 15px; }
.big > .i-sort { width: 28px; height: 30px; overflow: visible; }
.az-a { font: bold 18px "Liberation Sans", sans-serif; fill: #4a7ebb; }
.az-z { font: bold 18px "Liberation Sans", sans-serif; fill: #9a6fc0; }
.data-col { margin-left: 10px; }
.fx { width: 16px; font: italic 17px/16px "Liberation Serif", serif; color: #555; text-align: center; }

/* quick access */
.qat { height: 35px; background: #e6e5e9; display: flex; align-items: center; padding-left: 8px; flex: none; }
.q { width: 16px; height: 16px; }
.q-new { margin-left: 13px; } .q-prev { margin-left: 14px; } .q-shape { margin-left: 6px; }
.q-caret { width: 6px; height: 4px; margin-left: 7px; }
.q-caret.c2 { margin-left: 5px; }
.q-undo { margin-left: 11px; } .q-redo { margin-left: 9px; } .q-saveall { margin-left: 12px; }
.q-more { width: 9px; height: 7px; margin-left: 16px; }

/* document area */
.work { flex: none; height: 515px; display: flex; background: #e6e5e9; }
.page-wrap { flex: 1; display: flex; justify-content: center; padding-right: 1px; }
.page { width: 551px; height: 515px; background: #fff; padding: 136px 0 0 82px; position: relative; }
.doc-table { width: 271px; position: relative; }
.t-row { height: 29.460px; display: flex; }
.cell { border: 1px solid #000; border-width: 1px 0 0 1px; display: flex; align-items: center; justify-content: center; color: #000; font-weight: bold; }
.c-a { width: 131px; padding: 0 0 1px 4px; background: linear-gradient(#c5c3c7, #c5c3c7) 5px 0 / 100% 100% no-repeat; font-size: 15px; }
.c-b { width: 131px; background: #c5c3c7; border-right-width: 1px; padding: 2px 0 0 3px; font: bold 11px "DejaVu Serif", "Liberation Serif", serif; letter-spacing: -.2px; }
.row-end { width: 9px; background: #c5c3c7; border-top: 1px solid #fff; }
.t-last { height: 30px; }
.t-last .cell { border-bottom-width: 1px; }
.sel { background: #8c8a8d; padding: 3px 1px; }
.move-handle { position: absolute; left: -15px; top: -15px; width: 14px; height: 14px; border: 1px solid #888; background: #fff; padding: 0; }
.move-handle svg { width: 12px; height: 12px; }
.resize-handle { position: absolute; left: 263px; top: 355px; width: 14px; height: 14px; border: 1px solid #999; background: #fff; }

/* mini toolbar */
.mini { position: absolute; left: 72px; top: 51px; width: 333px; height: 66px; border: 1px solid #c6c6c6; background: #fff; display: flex; padding: 5px 0 0 3px; }
.mini-left { width: 247px; border-right: 1px solid #e3e3e3; height: 55px; }
.mini-row { display: flex; align-items: center; height: 24px; }
.row2 { margin-top: 5px; }
.combo { height: 24px; flex: none; border: 1px solid #c6c6c6; display: flex; align-items: center; justify-content: space-between; padding: 0 3px 0 2px; color: #444; font-size: 12.500px; }
.c-font { width: 76px; } .c-size { width: 58px; }
.chev { width: 16px; height: 9px; }
.mi { display: flex; align-items: flex-start; flex: none; }
.m-grow { width: 23px; margin-left: 6px; } .m-shrink { width: 19px; }
.big-a { font: 16px/18px "Liberation Sans", sans-serif; color: #555; margin-top: 3px; }
.small-a { font: 13px/18px "Liberation Sans", sans-serif; color: #555; margin-top: 3px; }
.tri { width: 6px; height: 4px; margin-top: 3px; }
.m-list { width: 33px; align-items: center; gap: 3px; }
.m-list2 { width: 29px; }
.mc { width: 6px; height: 4px; flex: none; }
.numtxt { font: 6px "Liberation Sans", sans-serif; fill: #3a78b5; }
.mb { height: 24px; display: flex; align-items: center; flex: none; justify-content: center; color: #555; }
.m-b { width: 22px; background: #bdbcbf; font: bold 13px "Liberation Sans", sans-serif; }
.m-i { width: 21px; font: italic 13px "Liberation Serif", serif; }
.m-al { width: 24px; }
.m-hl { width: 34px; gap: 4px; } .m-col { width: 34px; gap: 4px; } .m-fill { width: 35px; gap: 3px; }
.i-hl { width: 16px; height: 17px; }
.hltxt { font: 8px "Liberation Sans", sans-serif; fill: #444; }
.coltxt { font: bold 13px "Liberation Sans", sans-serif; fill: #444; }
.m-bord { width: 34px; background: #bdbcbf; gap: 7px; padding-left: 2px; }
.i-bd { width: 13px; height: 13px; }
.m-brush { width: 22px; }
.mini-right { display: flex; padding-left: 6px; gap: 2px; }
.mini-act { width: 37px; display: flex; flex-wrap: wrap; align-items: center; color: #777; align-content: flex-start; }
.i-act { width: 24px; height: 24px; margin-right: 1px; }
.mini-act span { width: 24px; text-align: center; margin-top: 7px; white-space: nowrap; }

/* scrollbar */
.vscroll { width: 16px; background: #e6e5e9; display: flex; flex-direction: column; }
.sb-btn { height: 15px; margin: 1px 0 0; border: 1px solid #c9c9c9; background: #fdfdfd; display: flex; align-items: center; justify-content: center; }
.sb-ar { width: 8px; height: 4px; }
.sb-thumb { height: 17px; margin: 21px 0 0; border: 1px solid #c2c2c2; background: #fff; }
.sb-fill { flex: 1; }
.vscroll .sb-btn:last-child { margin-bottom: 2px; }

/* status bar */
.status { height: 21px; background: #f3f2f4; border-top: 1px solid #c9c8cb; display: flex; align-items: center; padding-left: 8px; flex: none; color: #444; white-space: nowrap; }
.st-page { width: 116px; word-spacing: 1px; } .st-words { width: 101px; letter-spacing: .25px; } .st-lang { width: 74px; } .st-ins { width: 40px; }
.st-acc { width: 16px; height: 16px; margin-right: 3px; }
.st-right { margin-left: auto; display: flex; align-items: center; height: 20px; }
.view { width: 40px; height: 20px; display: flex; align-items: center; justify-content: center; }
.view-on { background: #c6c6c8; }
.zoom-track { width: 113px; height: 1px; background: #8a8a8a; margin-left: 6px; position: relative; }
.zoom-thumb { position: absolute; left: 45px; top: -5px; width: 5px; height: 11px; background: #777; }
.zoom-plus { margin-left: 4px; width: 20px; font-size: 15px; }
.zoom-val { width: 42px; text-align: left; padding-left: 3px; font-size: 12px; }

/* taskbar */
.taskbar { height: 40px; background: #8a8989; display: flex; padding-left: 15px; flex: none; position: relative; }
.slot { width: 62px; height: 40px; display: flex; align-items: center; justify-content: center; flex: none; position: relative; }
.ti { width: 32px; height: 32px; }
.slot.on { background: #a09fa0; background-clip: content-box; padding: 1px 2px; outline: 1px solid #b4b3b4; outline-offset: -2px; }
.slot.bright { background-color: #b4b4b6; outline-color: #e6e6e6; }
.slot-stack { justify-content: flex-start; padding: 1px 2px; gap: 1px; }
.stack-main { width: 53px; height: 38px; background: #a09fa0; border: 1px solid #b4b3b4; display: flex; align-items: center; justify-content: center; }
.stack-tail { width: 4px; height: 38px; background: #a09fa0; border: 1px solid #b4b3b4; border-left: 0; }
.tile { width: 29px; height: 29px; border: 2px solid; font: 17px/24px "Noto Sans", sans-serif; text-align: center; }
.t-pr { background: #2a0634; border-color: #c86fd8; color: #e59df2; }
.t-ps { background: #001e36; border-color: #27b5e6; color: #31c5f0; }
.t-ai { background: #2e1300; border-color: #e67a1e; color: #ff9a2e; }
.t-id { background: #49021f; border-color: #e23f7d; color: #ff3d8b; }
.t-lr { background: #0a2030; border-color: #a9cbe3; color: #b5d9ee; }
.wtxt { font: bold 14px "Liberation Sans", sans-serif; fill: #fff; text-anchor: middle; }
.stxt { font: bold 13px "Liberation Sans", sans-serif; fill: #fff; }
.tray { position: absolute; left: 1077px; top: 0; right: 0; height: 40px; display: flex; align-items: center; color: #fff; }
.t-up { width: 9px; height: 5px; margin-right: 12px; }
.t-ic { width: 16px; height: 16px; margin-right: 8px; }
.t-zh { margin: 0 13px 0 5px; font-size: 13px; }
.t-s { margin-right: 18px; }
.clock { display: flex; flex-direction: column; align-items: center; width: 62px; line-height: 17px; }

/* overlays */
.arrow { position: absolute; left: 712px; top: 272px; width: 240px; height: 160px; overflow: visible; }
.wm { position: absolute; left: 1020px; top: 620px; width: 346px; height: 130px; pointer-events: none; }
.wm-key { position: absolute; left: 3px; top: 25px; width: 30px; height: 50px; }
.wm-act1 { position: absolute; left: 57px; top: 29px; font-size: 20px; line-height: 22px; color: #c9c9cb; white-space: nowrap; }
.wm-act2 { position: absolute; left: 57px; top: 53px; font-size: 15px; line-height: 18px; color: #c9c9cb; white-space: nowrap; }
.wm-paw { position: absolute; left: 105px; top: 0; width: 70px; height: 60px; }
.wm-bai { position: absolute; left: 27px; top: 26px; font: bold 54px/60px "Liberation Sans", sans-serif; color: rgba(255,255,255,.85); text-shadow: 0 0 2px #aaa; white-space: nowrap; }
.wm-jy { position: absolute; left: 186px; top: 34px; font-size: 40px; line-height: 46px; font-weight: bold; color: rgba(255,255,255,.85); text-shadow: 0 0 2px #aaa; white-space: nowrap; }
.wm-url { position: absolute; left: 28px; top: 84px; font: 30px/36px "Liberation Sans", sans-serif; color: rgba(255,255,255,.7); text-shadow: 0 0 2px #999; white-space: nowrap; }
```
